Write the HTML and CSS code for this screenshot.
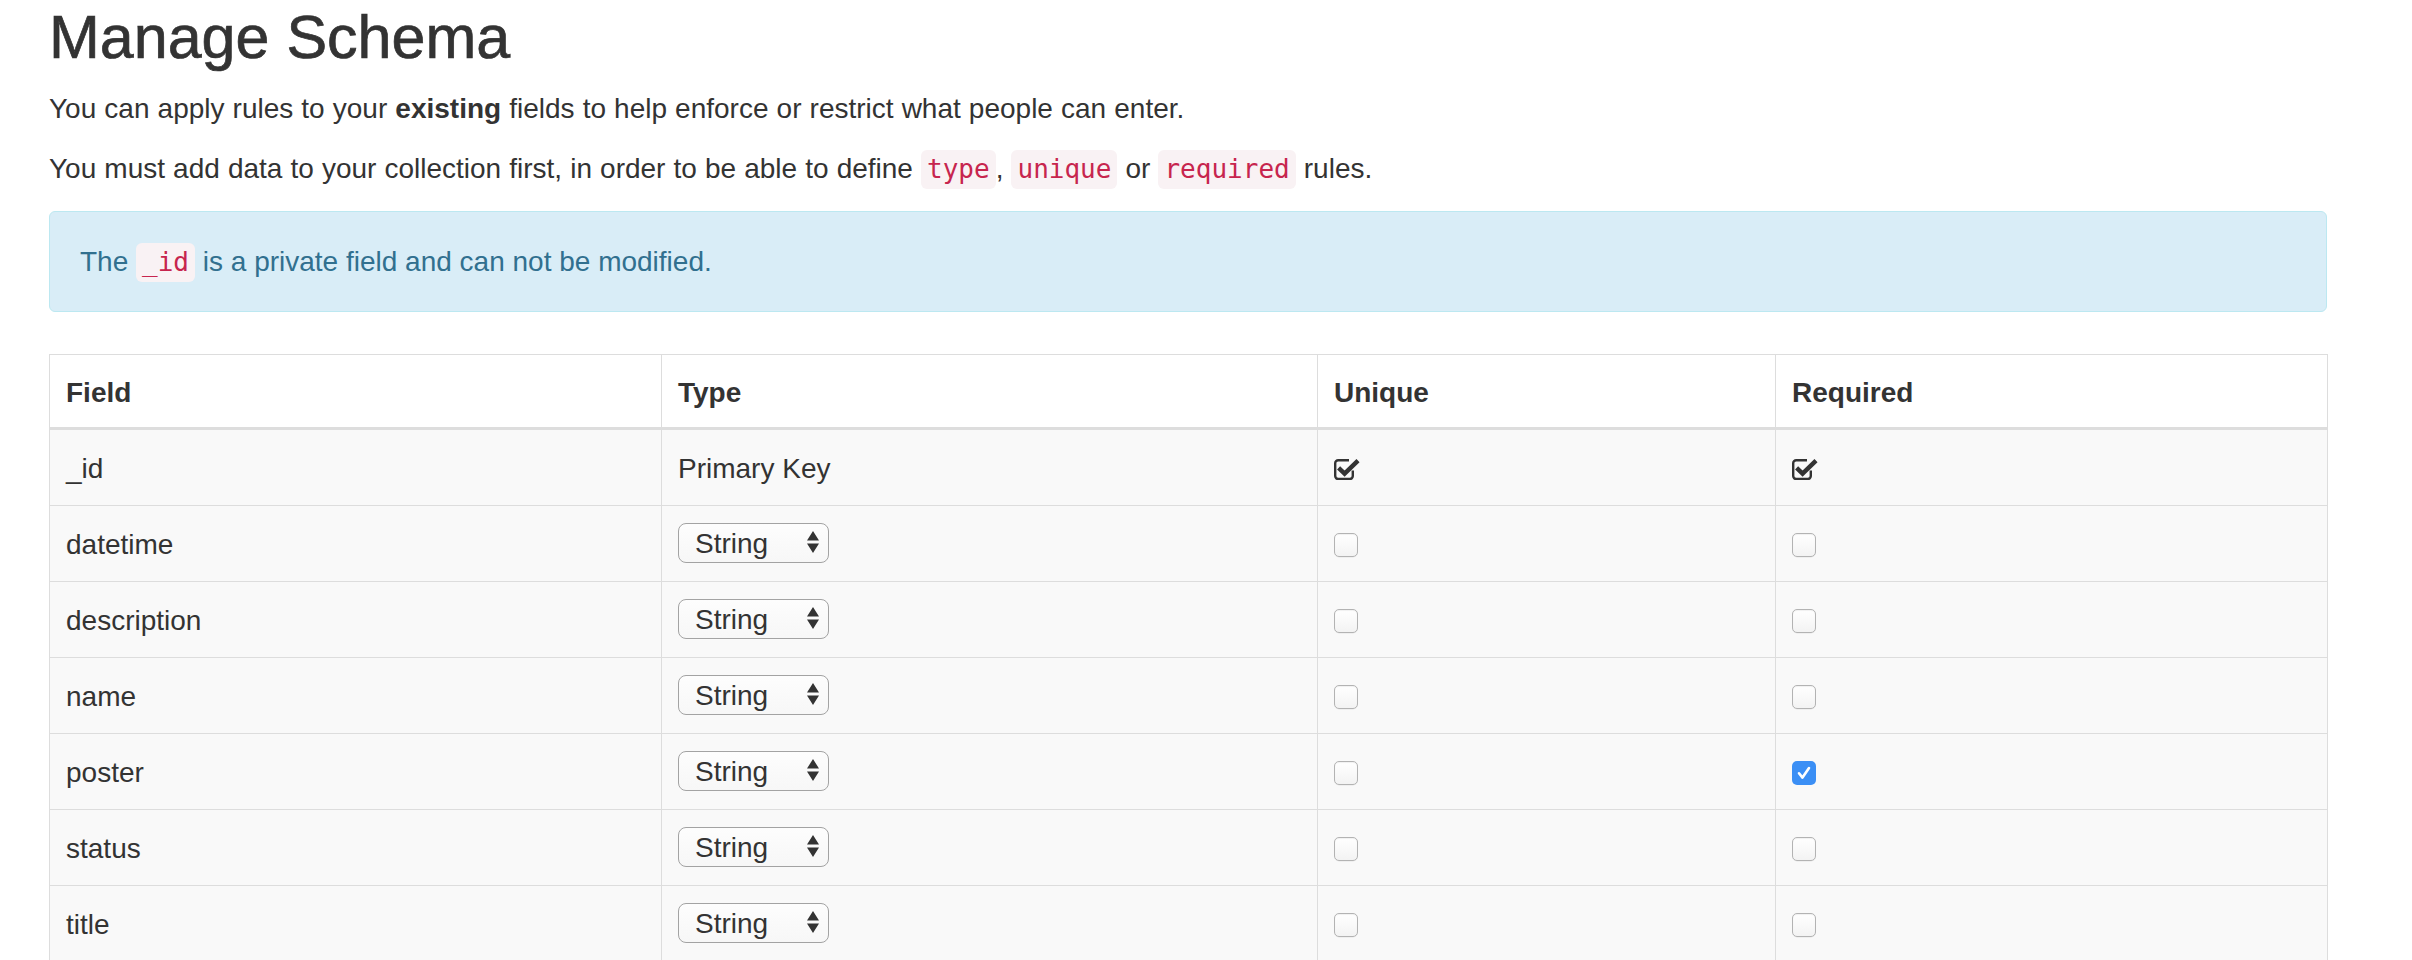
FILE: index.html
```html
<!DOCTYPE html>
<html lang="en">
<head>
<meta charset="utf-8">
<title>Manage Schema</title>
<link rel="stylesheet" href="styles.css">
</head>
<body>
<div class="page">
  <h1 class="title">Manage Schema</h1>
  <p class="intro">You can apply rules to your <strong>existing</strong> fields to help enforce or restrict what people can enter.</p>
  <p class="intro">You must add data to your collection first, in order to be able to define <code>type</code>, <code>unique</code> or <code>required</code> rules.</p>
  <div class="alert">The <code>_id</code> is a private field and can not be modified.</div>

  <table class="schema">
    <colgroup>
      <col class="col-field">
      <col class="col-type">
      <col class="col-unique">
      <col class="col-required">
    </colgroup>
    <thead>
      <tr><th>Field</th><th>Type</th><th>Unique</th><th>Required</th></tr>
    </thead>
    <tbody>
      <tr>
        <td>_id</td>
        <td>Primary Key</td>
        <td><span class="fa-check"><svg width="26" height="22" viewBox="0 0 26 22"><path d="M15 2.2H4.2a3 3 0 0 0-3 3V18a3 3 0 0 0 3 3H15.8a3 3 0 0 0 3-3V12.5" fill="none" stroke="#333" stroke-width="2.4"/><path d="M4.6 9.8L10.6 15.6L24 2.6" fill="none" stroke="#333" stroke-width="4.4" stroke-linejoin="miter"/></svg></span></td>
        <td><span class="fa-check"><svg width="26" height="22" viewBox="0 0 26 22"><path d="M15 2.2H4.2a3 3 0 0 0-3 3V18a3 3 0 0 0 3 3H15.8a3 3 0 0 0 3-3V12.5" fill="none" stroke="#333" stroke-width="2.4"/><path d="M4.6 9.8L10.6 15.6L24 2.6" fill="none" stroke="#333" stroke-width="4.4" stroke-linejoin="miter"/></svg></span></td>
      </tr>
      <tr>
        <td>datetime</td>
        <td class="type-cell"><span class="select-wrap"><select class="type-select"><option>String</option></select><svg class="select-arrows" width="12" height="22" viewBox="0 0 12 22"><path d="M0 9.5L6 0L12 9.5Z M0 12.5L12 12.5L6 22Z" fill="#333"/></svg></span></td>
        <td><span class="cb"></span></td>
        <td><span class="cb"></span></td>
      </tr>
      <tr>
        <td>description</td>
        <td class="type-cell"><span class="select-wrap"><select class="type-select"><option>String</option></select><svg class="select-arrows" width="12" height="22" viewBox="0 0 12 22"><path d="M0 9.5L6 0L12 9.5Z M0 12.5L12 12.5L6 22Z" fill="#333"/></svg></span></td>
        <td><span class="cb"></span></td>
        <td><span class="cb"></span></td>
      </tr>
      <tr>
        <td>name</td>
        <td class="type-cell"><span class="select-wrap"><select class="type-select"><option>String</option></select><svg class="select-arrows" width="12" height="22" viewBox="0 0 12 22"><path d="M0 9.5L6 0L12 9.5Z M0 12.5L12 12.5L6 22Z" fill="#333"/></svg></span></td>
        <td><span class="cb"></span></td>
        <td><span class="cb"></span></td>
      </tr>
      <tr>
        <td>poster</td>
        <td class="type-cell"><span class="select-wrap"><select class="type-select"><option>String</option></select><svg class="select-arrows" width="12" height="22" viewBox="0 0 12 22"><path d="M0 9.5L6 0L12 9.5Z M0 12.5L12 12.5L6 22Z" fill="#333"/></svg></span></td>
        <td><span class="cb"></span></td>
        <td><span class="cb cb-on"><svg width="24" height="24" viewBox="0 0 24 24"><path d="M7 12.3L10.5 16.6L17 7" fill="none" stroke="#fff" stroke-width="2.6" stroke-linecap="round" stroke-linejoin="round"/></svg></span></td>
      </tr>
      <tr>
        <td>status</td>
        <td class="type-cell"><span class="select-wrap"><select class="type-select"><option>String</option></select><svg class="select-arrows" width="12" height="22" viewBox="0 0 12 22"><path d="M0 9.5L6 0L12 9.5Z M0 12.5L12 12.5L6 22Z" fill="#333"/></svg></span></td>
        <td><span class="cb"></span></td>
        <td><span class="cb"></span></td>
      </tr>
      <tr>
        <td>title</td>
        <td class="type-cell"><span class="select-wrap"><select class="type-select"><option>String</option></select><svg class="select-arrows" width="12" height="22" viewBox="0 0 12 22"><path d="M0 9.5L6 0L12 9.5Z M0 12.5L12 12.5L6 22Z" fill="#333"/></svg></span></td>
        <td><span class="cb"></span></td>
        <td><span class="cb"></span></td>
      </tr>
    </tbody>
  </table>
</div>
</body>
</html>
```

FILE: styles.css
```css
html, body {
  margin: 0;
  padding: 0;
  background: #fff;
}

body {
  font-family: "Liberation Sans", Arial, Helvetica, sans-serif;
  font-size: 28px;
  line-height: 36px;
  color: #333;
}

.page {
  margin-left: 49px;
  width: 2278px;
  padding-top: 1px;
}

.title {
  margin: 0 0 18px;
  font-size: 61px;
  line-height: 72px;
  font-weight: 400;
  color: #333;
  -webkit-text-stroke: 0.7px #333;
}

.intro {
  margin: 0 0 24px;
  word-spacing: 0.3px;
}

.intro strong {
  font-weight: 700;
}

code {
  font-family: "DejaVu Sans Mono", "Liberation Mono", monospace;
  font-size: 26px;
  line-height: 1;
  color: #c7254e;
  background: #f9f2f4;
  border-radius: 6px;
  padding: 4px 6px 5px;
  word-spacing: 0;
}

.alert {
  margin: 0 0 42px;
  padding: 32px 30px 31px;
  background: #d9edf7;
  border: 1px solid #bce8f1;
  border-radius: 6px;
  color: #31708f;
}

.schema {
  width: 2278px;
  table-layout: fixed;
  border-collapse: collapse;
  border: 1px solid #ddd;
}

.col-field { width: 612px; }
.col-type { width: 656px; }
.col-unique { width: 458px; }
.col-required { width: 552px; }

.schema th {
  text-align: left;
  font-weight: 700;
  background: #fff;
  padding: 20px 16px 16px;
  line-height: 36px;
  border: 1px solid #ddd;
  border-bottom: 3px solid #ddd;
}

.schema td {
  background: #f9f9f9;
  padding: 19px 16px 17px;
  line-height: 39px;
  border: 1px solid #ddd;
  vertical-align: middle;
}

.schema td.type-cell {
  padding: 17px 16px 18px;
}

.select-wrap {
  position: relative;
  display: flex;
  width: 151px;
  height: 40px;
}

.type-select {
  appearance: none;
  -webkit-appearance: none;
  width: 151px;
  height: 40px;
  margin: 0;
  box-sizing: border-box;
  border: 1.5px solid #a3a3a3;
  border-radius: 8px;
  background: linear-gradient(#fdfdfd, #f7f7f7);
  font-family: "Liberation Sans", Arial, Helvetica, sans-serif;
  font-size: 28px;
  color: #333;
  padding: 0 0 0 16px;
  outline: none;
}

.select-arrows {
  position: absolute;
  right: 10px;
  top: 8px;
  pointer-events: none;
}

.fa-check {
  display: block;
  width: 26px;
  height: 22px;
}

.fa-check svg {
  display: block;
}

.cb {
  display: block;
  width: 24px;
  height: 24px;
  box-sizing: border-box;
  border: 1px solid #b3b3b3;
  border-radius: 5px;
  background: linear-gradient(#ffffff, #f3f3f3);
  box-shadow: inset 0 1px 1px rgba(0, 0, 0, 0.06), 0 0.5px 0.5px rgba(0, 0, 0, 0.08);
}

.cb-on {
  border: none;
  background: #3b8ff5;
  box-shadow: none;
}

.cb-on svg {
  display: block;
}
```
